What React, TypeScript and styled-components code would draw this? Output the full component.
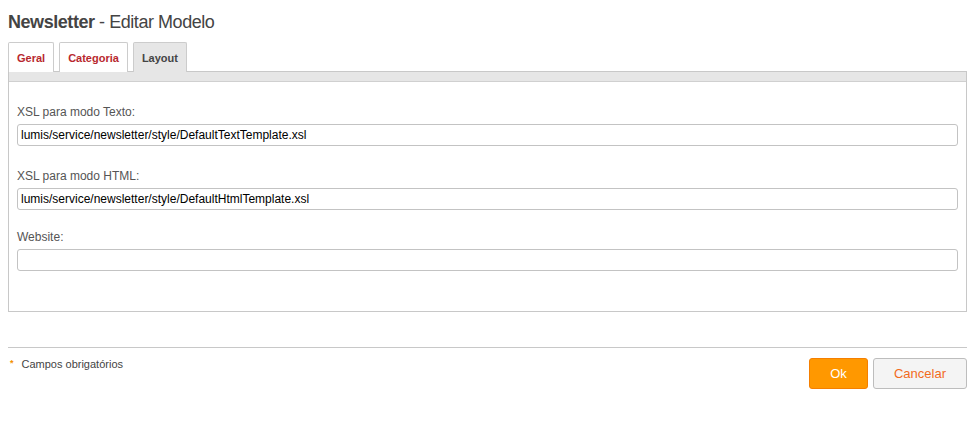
import React from "react";
import styled, { createGlobalStyle } from "styled-components";

const Global = createGlobalStyle`
  body { margin: 8px; font-family: "Liberation Sans", Arial, sans-serif; background: #fff; }
`;

const Title = styled.h1`
  margin: 0;
  padding-top: 2px;
  font-size: 18px;
  line-height: 24px;
  font-weight: normal;
  color: #444;
  height: 34px;
  box-sizing: border-box;
  letter-spacing: -0.45px;
  b { font-weight: bold; }
`;

const Tabs = styled.div`
  display: flex;
  gap: 5px;
  height: 29px;
`;

const Tab = styled.div<{ $active?: boolean }>`
  box-sizing: border-box;
  height: 30px;
  padding: 0 8px;
  display: flex;
  align-items: center;
  border: 1px solid #ccc;
  border-bottom: none;
  border-radius: 2px 2px 0 0;
  font-size: 11px;
  font-weight: bold;
  color: ${(p) => (p.$active ? "#444" : "#b8282e")};
  background: ${(p) => (p.$active ? "#e6e6e6" : "#fff")};
  position: relative;
  z-index: 1;
`;

const Panel = styled.div`
  border: 1px solid #c8c8c8;
  height: 241px;
  box-sizing: border-box;
`;

const Strip = styled.div`
  height: 9px;
  background: #e6e6e6;
  border-bottom: 1px solid #d0d0d0;
`;

const Body = styled.div`
  padding: 23px 8px 0 8px;
  display: flex;
  flex-direction: column;
  gap: 20px;
`;

const Field = styled.div<{ $extra?: number }>`
  display: flex;
  flex-direction: column;
  gap: 5px;
  margin-top: ${(p) => p.$extra ?? 0}px;
`;

const Label = styled.label`
  font-size: 12px;
  color: #555;
  line-height: 14px;
`;

const Input = styled.input`
  box-sizing: border-box;
  height: 22px;
  width: 100%;
  border: 1px solid #c3c3c3;
  border-radius: 3px;
  padding: 0 3px;
  font-family: "Liberation Sans", Arial, sans-serif;
  font-size: 12px;
  color: #000;
  outline: none;
`;

const Rule = styled.hr`
  margin: 35px 0 0 0;
  border: none;
  border-top: 1px solid #c8c8c8;
`;

const Footer = styled.div`
  display: flex;
  justify-content: space-between;
  align-items: flex-start;
  padding-top: 10px;
`;

const Required = styled.div`
  display: flex;
  align-items: flex-start;
  gap: 8px;
  font-size: 11px;
  color: #444;
  padding-left: 2px;
  line-height: 12px;
`;

const Star = styled.span`
  color: #f39200;
  font-size: 9px;
  font-weight: bold;
  line-height: 9px;
  margin-top: 1px;
`;

const Buttons = styled.div`
  display: flex;
  gap: 5px;
`;

const Button = styled.button<{ $primary?: boolean }>`
  box-sizing: border-box;
  height: 31px;
  padding: 0 20px;
  border-radius: 3px;
  font-family: "Liberation Sans", Arial, sans-serif;
  font-size: 13px;
  cursor: pointer;
  border: 1px solid ${(p) => (p.$primary ? "#f57f00" : "#bdbdbd")};
  background: ${(p) => (p.$primary ? "#ff9800" : "#f4f4f4")};
  color: ${(p) => (p.$primary ? "#fff" : "#f26b1d")};
  min-width: ${(p) => (p.$primary ? "59px" : "94px")};
`;

export default function App() {
  return (
    <>
      <Global />
      <Title>
        <b>Newsletter</b> - Editar Modelo
      </Title>
      <Tabs>
        <Tab>Geral</Tab>
        <Tab>Categoria</Tab>
        <Tab $active>Layout</Tab>
      </Tabs>
      <Panel>
        <Strip />
        <Body>
          <Field>
            <Label>XSL para modo Texto:</Label>
            <Input defaultValue="lumis/service/newsletter/style/DefaultTextTemplate.xsl" />
          </Field>
          <Field $extra={3}>
            <Label>XSL para modo HTML:</Label>
            <Input defaultValue="lumis/service/newsletter/style/DefaultHtmlTemplate.xsl" />
          </Field>
          <Field>
            <Label>Website:</Label>
            <Input defaultValue="" />
          </Field>
        </Body>
      </Panel>
      <Rule />
      <Footer>
        <Required>
          <Star>*</Star>
          Campos obrigatórios
        </Required>
        <Buttons>
          <Button $primary>Ok</Button>
          <Button>Cancelar</Button>
        </Buttons>
      </Footer>
    </>
  );
}
